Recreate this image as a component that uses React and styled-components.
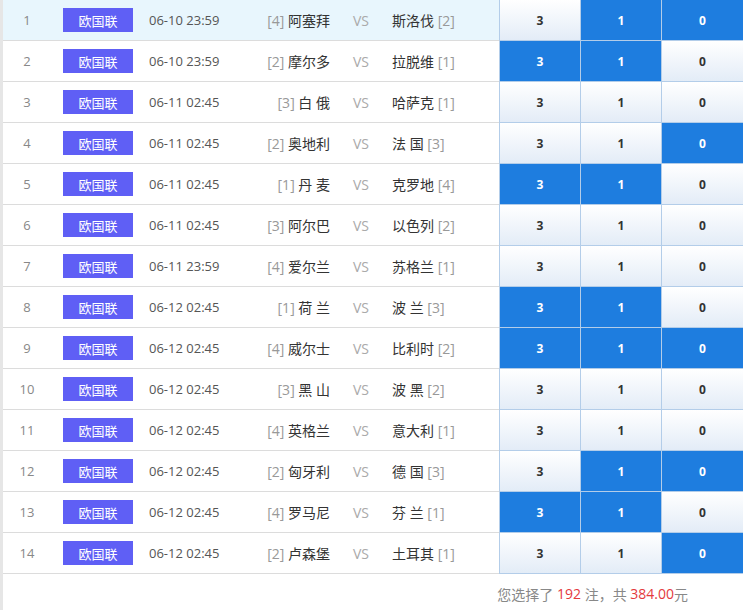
import React from "react";
import styled, { createGlobalStyle } from "styled-components";

const GlobalStyle = createGlobalStyle`
  html, body {
    margin: 0;
    padding: 0;
    background: #fff;
    font-family: "Open Sans", "Noto Sans CJK SC", sans-serif;
  }
`;

const Page = styled.div`
  width: 743px;
  border-left: 3px solid #e6e6e6;
  box-sizing: border-box;
  min-height: 610px;
`;

const Row = styled.div`
  display: grid;
  grid-template-columns: 48px 98px 100px 81px 62px 107px 81px 81px 82px;
  height: 41px;
  border-bottom: 1px solid #dcdcdc;
  box-sizing: border-box;
  font-size: 13px;
  background: ${(p) => (p.$hover ? "#e8f6fd" : "#fff")};
`;

const Cell = styled.div`
  display: flex;
  align-items: center;
  justify-content: ${(p) => p.$justify || "flex-start"};
  white-space: nowrap;
  font-size: 14px;
`;

const Index = styled(Cell)`
  justify-content: center;
  color: #888;
  font-size: 13px;
`;

const Badge = styled.span`
  display: inline-flex;
  align-items: center;
  justify-content: center;
  margin-left: 12px;
  width: 70px;
  height: 24px;
  background: #5f5ff5;
  color: #fff;
  font-size: 13px;
`;

const DateText = styled(Cell)`
  color: #555;
  font-size: 13px;
`;

const Rank = styled.span`
  color: #999;
`;

const Team = styled.span`
  color: #333;
`;

const Vs = styled(Cell)`
  justify-content: center;
  color: #aaa;
  font-size: 14px;
`;

const Odd = styled.div`
  display: flex;
  align-items: center;
  justify-content: center;
  font-weight: 700;
  font-size: 12px;
  margin-bottom: -1px;
  border: 1px solid #b3cde9;
  border-width: 0 0 1px 1px;
  color: ${(p) => (p.$on ? "#fff" : "#333")};
  background: ${(p) =>
    p.$on ? "#1e7ddf" : "linear-gradient(180deg, #ffffff 0%, #e3ecf7 100%)"};
`;

const Footer = styled.div`
  display: flex;
  justify-content: flex-end;
  padding: 10px 55px 0 0;
  font-size: 14px;
  color: #888;
`;

const Red = styled.span`
  color: #e4393c;
`;

const matches = [
  ["06-10 23:59", 4, "阿塞拜", "斯洛伐", 2, [0, 1, 1]],
  ["06-10 23:59", 2, "摩尔多", "拉脱维", 1, [1, 1, 0]],
  ["06-11 02:45", 3, "白 俄", "哈萨克", 1, [0, 0, 0]],
  ["06-11 02:45", 2, "奥地利", "法 国", 3, [0, 0, 1]],
  ["06-11 02:45", 1, "丹 麦", "克罗地", 4, [1, 1, 0]],
  ["06-11 02:45", 3, "阿尔巴", "以色列", 2, [0, 0, 0]],
  ["06-11 23:59", 4, "爱尔兰", "苏格兰", 1, [0, 0, 0]],
  ["06-12 02:45", 1, "荷 兰", "波 兰", 3, [1, 1, 0]],
  ["06-12 02:45", 4, "威尔士", "比利时", 2, [1, 1, 1]],
  ["06-12 02:45", 3, "黑 山", "波 黑", 2, [0, 0, 0]],
  ["06-12 02:45", 4, "英格兰", "意大利", 1, [0, 0, 0]],
  ["06-12 02:45", 2, "匈牙利", "德 国", 3, [0, 1, 1]],
  ["06-12 02:45", 4, "罗马尼", "芬 兰", 1, [1, 1, 0]],
  ["06-12 02:45", 2, "卢森堡", "土耳其", 1, [0, 0, 1]],
];

const labels = ["3", "1", "0"];

export default function App() {
  return (
    <>
      <GlobalStyle />
      <Page>
        {matches.map(([date, hr, home, away, ar, sel], i) => (
          <Row key={i} $hover={i === 0}>
            <Index>{i + 1}</Index>
            <Cell>
              <Badge>欧国联</Badge>
            </Cell>
            <DateText>{date}</DateText>
            <Cell $justify="flex-end">
              <Rank>[{hr}]</Rank>&nbsp;<Team>{home}</Team>
            </Cell>
            <Vs>VS</Vs>
            <Cell>
              <Team>{away}</Team>&nbsp;<Rank>[{ar}]</Rank>
            </Cell>
            {labels.map((l, j) => (
              <Odd key={l} $on={sel[j] === 1}>
                {l}
              </Odd>
            ))}
          </Row>
        ))}
        <Footer>
          您选择了&nbsp;<Red>192</Red>&nbsp;注，共&nbsp;<Red>384.00</Red>元
        </Footer>
      </Page>
    </>
  );
}
